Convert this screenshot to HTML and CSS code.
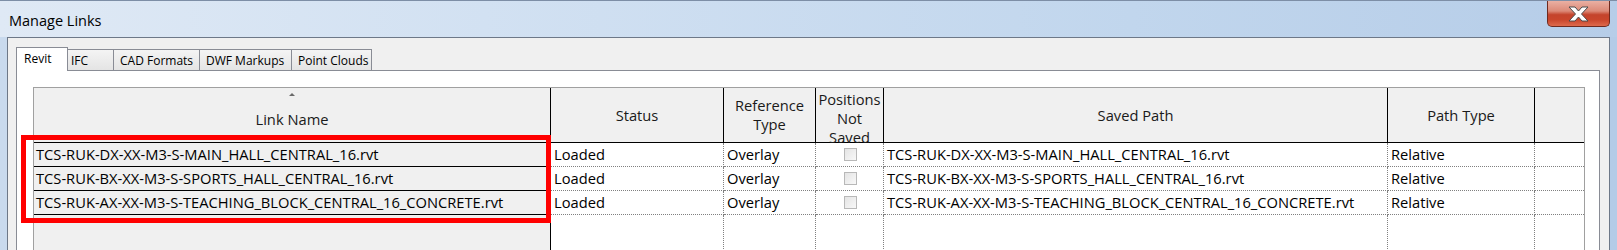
FILE: index.html
```html
<!DOCTYPE html>
<html lang="en">
<head>
    <meta charset="UTF-8">
    <title>Manage Links</title>
    <link rel="stylesheet" href="styles.css">
</head>
<body>

    <div class="window">
        <div class="titlebar">
            <div class="title">Manage Links</div>
            <div class="close-btn">
                <svg width="21" height="16" viewBox="0 0 21 16">
                    <polygon points="1,1 7,1 10.5,5 14,1 20,1 13.5,8 20,15 14,15 10.5,11 7,15 1,15 7.5,8" fill="#fff" stroke="#4b4b4b" stroke-width="1"/>
                </svg>
            </div>
        </div>

        <div class="client">
            <div class="tabs">
                <div class="tab active tab-revit">Revit</div>
                <div class="tab tab-ifc">IFC</div>
                <div class="tab tab-cad">CAD Formats</div>
                <div class="tab tab-dwf">DWF Markups</div>
                <div class="tab tab-pc">Point Clouds</div>
            </div>

            <div class="tab-page">
                <div class="grid">
                    <!-- header -->
                    <div class="hd hd-sorted"><span class="sort-arrow"></span>Link Name</div>
                    <div class="hd">Status</div>
                    <div class="hd">Reference<br>Type</div>
                    <div class="hd hd-tall">Positions<br>Not<br>Saved</div>
                    <div class="hd">Saved Path</div>
                    <div class="hd">Path Type</div>
                    <div class="hd last"></div>

                    <!-- rows -->
                    <div class="nm">TCS-RUK-DX-XX-M3-S-MAIN_HALL_CENTRAL_16.rvt</div>
                    <div class="cl">Loaded</div>
                    <div class="cl">Overlay</div>
                    <div class="cl chk-cell"><span class="chk"></span></div>
                    <div class="cl">TCS-RUK-DX-XX-M3-S-MAIN_HALL_CENTRAL_16.rvt</div>
                    <div class="cl">Relative</div>
                    <div class="cl last"></div>

                    <div class="nm">TCS-RUK-BX-XX-M3-S-SPORTS_HALL_CENTRAL_16.rvt</div>
                    <div class="cl">Loaded</div>
                    <div class="cl">Overlay</div>
                    <div class="cl chk-cell"><span class="chk"></span></div>
                    <div class="cl">TCS-RUK-BX-XX-M3-S-SPORTS_HALL_CENTRAL_16.rvt</div>
                    <div class="cl">Relative</div>
                    <div class="cl last"></div>

                    <div class="nm">TCS-RUK-AX-XX-M3-S-TEACHING_BLOCK_CENTRAL_16_CONCRETE.rvt</div>
                    <div class="cl">Loaded</div>
                    <div class="cl">Overlay</div>
                    <div class="cl chk-cell"><span class="chk"></span></div>
                    <div class="cl">TCS-RUK-AX-XX-M3-S-TEACHING_BLOCK_CENTRAL_16_CONCRETE.rvt</div>
                    <div class="cl">Relative</div>
                    <div class="cl last"></div>

                    <!-- empty space under the rows -->
                    <div class="nm fill"></div>
                    <div class="cl fill"></div>
                    <div class="cl fill"></div>
                    <div class="cl fill"></div>
                    <div class="cl fill"></div>
                    <div class="cl fill"></div>
                    <div class="cl fill last"></div>

                    <div class="highlight"></div>
                </div>
            </div>
        </div>
    </div>

</body>
</html>
```

FILE: styles.css
```css
body {
    margin: 0;
    overflow: hidden;
    font-family: "Open Sans", "Liberation Sans", sans-serif;
    background: #fff;
}
.window {
    width: 1617px;
    height: 250px;
    overflow: hidden;
    box-sizing: border-box;
    border-top: 1px solid #7d8ea6;
    background: linear-gradient(to right, #c9daee, #bcd1ea 50%, #b4cbe7);
}
.titlebar {
    height: 36px;
    display: flex;
    justify-content: space-between;
    align-items: flex-start;
    background: linear-gradient(to right, #dfe9f5, #d2e1f2 30%, #c1d6ed 70%, #b6cde8);
}
.title {
    padding: 10px 0 0 9px;
    font-size: 14.5px;
    line-height: 20px;
    color: #000;
}
.close-btn {
    width: 63px;
    height: 26px;
    margin-right: 7px;
    box-sizing: border-box;
    border: 1px solid #6e2a1f;
    border-top: none;
    border-radius: 0 0 5px 5px;
    background: linear-gradient(to bottom, #eab0a3 0%, #dc8a78 40%, #c4442c 55%, #c9462c 75%, #de6a4c 100%);
    display: flex;
    align-items: center;
    justify-content: center;
}
.close-btn svg {
    margin-top: 1px;
}
/* dialog client area */
.client {
    margin: 0 7px;
    border: 1px solid #6d7888;
    background: #f0f0f0;
    padding: 9px 9px 0 8px;
    height: 300px;
}
.tabs {
    display: flex;
    align-items: flex-end;
    height: 23px;
}
.tab {
    box-sizing: border-box;
    height: 21px;
    padding: 4px 0 0 6px;
    font-size: 12px;
    line-height: 14px;
    color: #000;
    border: 1px solid #898c95;
    border-bottom: none;
    border-left: none;
    background: linear-gradient(to bottom, #f4f4f4, #e4e4e4);
}
.tab.active {
    height: 24px;
    margin-bottom: -1px;
    padding-left: 7px;
    border-left: 1px solid #898c95;
    background: #fff;
    position: relative;
    z-index: 1;
}
.tab-revit { width: 52px; }
.tab-ifc { width: 46px; padding-left: 3px; }
.tab-cad { width: 86px; }
.tab-dwf { width: 92px; }
.tab-pc { width: 80px; }

.tab-page {
    border: 1px solid #898c95;
    background: #fff;
    padding: 16px 14px 0 16px;
    height: 300px;
}
/* Links grid */
.grid {
    position: relative;
    display: grid;
    grid-template-columns: 517px 173px 92px 68px 504px 147px 49px;
    border: 1px solid #a0a0a0;
    font-size: 14.7px;
    color: #000;
}
.hd {
    position: relative;
    box-sizing: border-box;
    height: 55px;
    background: #f0f0f0;
    border-right: 1px solid #000;
    border-bottom: 1px solid #000;
    display: flex;
    align-items: center;
    justify-content: center;
    text-align: center;
    line-height: 19px;
    color: #1a1a1a;
}
.hd-sorted {
    padding-top: 8px;
}
.hd-tall {
    align-items: flex-start;
    padding-top: 2px;
}
.hd.last {
    border-right: none;
}
.sort-arrow {
    position: absolute;
    top: 5px;
    left: 50%;
    margin-left: -3px;
    border-left: 3px solid transparent;
    border-right: 3px solid transparent;
    border-bottom: 3px solid #6a6a6a;
}
.nm, .cl {
    box-sizing: border-box;
    height: 24px;
    padding: 0 2px;
    line-height: 22px;
    white-space: nowrap;
    overflow: hidden;
}
.nm {
    background: #f0f0f0;
    border-right: 1px solid #000;
    border-bottom: 1px solid #000;
}
.cl {
    background: #fff;
    border-right: 1px dotted #808080;
    border-bottom: 1px dotted #808080;
    padding-left: 3px;
}
.cl.last {
    border-right: none;
}
.fill {
    height: 80px;
    border-bottom: none;
}
.chk-cell {
    display: flex;
    align-items: center;
    justify-content: center;
}
.chk {
    width: 13px;
    height: 13px;
    box-sizing: border-box;
    border: 1px solid #b8b8b8;
    background: linear-gradient(to bottom right, #e4e4e4, #f8f8f8);
}
.highlight {
    position: absolute;
    left: -13px;
    top: 47px;
    width: 530px;
    height: 88px;
    box-sizing: border-box;
    border: 5px solid #ff0000;
}
```
